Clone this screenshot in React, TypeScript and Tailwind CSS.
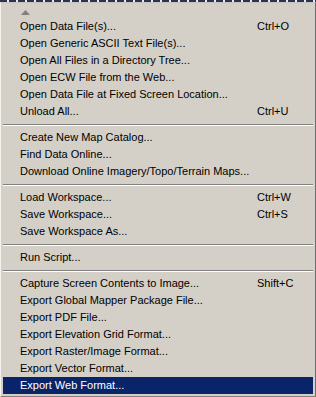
import React from 'react';

type Item = { label: string; shortcut?: string; active?: boolean } | 'sep';

const items: Item[] = [
  { label: 'Open Data File(s)...', shortcut: 'Ctrl+O' },
  { label: 'Open Generic ASCII Text File(s)...' },
  { label: 'Open All Files in a Directory Tree...' },
  { label: 'Open ECW File from the Web...' },
  { label: 'Open Data File at Fixed Screen Location...' },
  { label: 'Unload All...', shortcut: 'Ctrl+U' },
  'sep',
  { label: 'Create New Map Catalog...' },
  { label: 'Find Data Online...' },
  { label: 'Download Online Imagery/Topo/Terrain Maps...' },
  'sep',
  { label: 'Load Workspace...', shortcut: 'Ctrl+W' },
  { label: 'Save Workspace...', shortcut: 'Ctrl+S' },
  { label: 'Save Workspace As...' },
  'sep',
  { label: 'Run Script...' },
  'sep',
  { label: 'Capture Screen Contents to Image...', shortcut: 'Shift+C' },
  { label: 'Export Global Mapper Package File...' },
  { label: 'Export PDF File...' },
  { label: 'Export Elevation Grid Format...' },
  { label: 'Export Raster/Image Format...' },
  { label: 'Export Vector Format...' },
  { label: 'Export Web Format...', active: true },
];

const App: React.FC = () => {
  return (
    <div className="w-[316px] h-[397px] overflow-hidden bg-[#d4d0c8] font-['Liberation_Sans',Arial,sans-serif] text-[11px] text-black">
      {/* strip of the menu bar above */}
      <div className="h-[2px] bg-[repeating-linear-gradient(90deg,#2c3350_0px,#2c3350_7px,#e8e8ee_7px,#e8e8ee_9px)]"></div>
      <div className="h-[395px] border-l border-t border-l-[#f4f3ef] border-t-[#c8c6c0] border-r border-r-[#6f6d69] border-b border-b-[#808080] pl-[2px] pr-[2px]">
        <div className="h-[15px] flex items-end pb-[3px] pl-[18px]">
          <svg width="9" height="5" viewBox="0 0 9 5">
            <path d="M4.5 0 L9 5 L0 5 Z" fill="#808080" />
          </svg>
        </div>
        {items.map((it, i) =>
          it === 'sep' ? (
            <div key={i} className="pt-[4px] pb-[3px]">
              <div className="h-px bg-[#808080]"></div>
              <div className="h-px bg-white"></div>
            </div>
          ) : (
            <div
              key={i}
              className={`h-[17px] flex items-center pl-[17px] ${it.active ? 'bg-[#0a246a] text-white' : ''}`}
            >
              <span className="flex-1 whitespace-nowrap">{it.label}</span>
              {it.shortcut && <span className="w-[56px] whitespace-nowrap">{it.shortcut}</span>}
            </div>
          )
        )}
      </div>
    </div>
  );
};

export default App;
